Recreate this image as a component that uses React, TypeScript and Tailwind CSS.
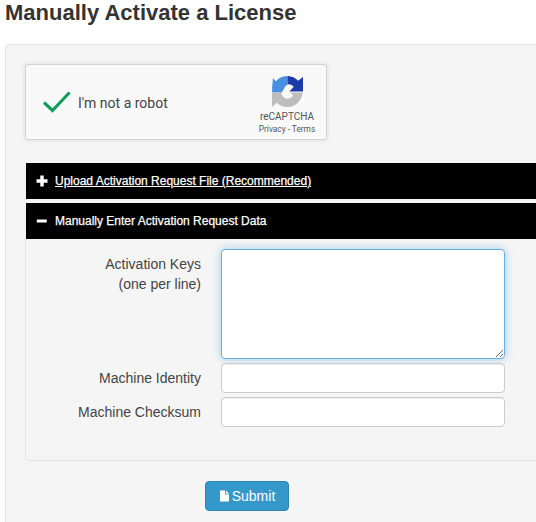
export default function App() {
  return (
    <div className="w-[536px] h-[522px] overflow-hidden bg-white text-[#333] text-[14px] leading-[20px]" style={{ fontFamily: '"Liberation Sans", Arial, sans-serif' }}>
      <h1 className="ml-[5px] h-[44px] text-[22px] leading-[26px] font-bold text-[#333] whitespace-nowrap">Manually Activate a License</h1>
      <div className="ml-[5px] w-[640px] h-[600px] bg-[#f5f5f5] border border-[#e3e3e3] rounded-[4px] pt-[19px] pl-[19px]">
        <div className="relative w-[302px] h-[76px] bg-[#f9f9f9] border border-[#d3d3d3] rounded-[3px] shadow-[0_0_4px_1px_rgba(0,0,0,0.08)] flex items-center">
          <svg className="ml-[16px] shrink-0" width="30" height="24" viewBox="0 0 30 24" fill="none">
            <path d="M2 12.5 L10.5 20.5 L27.5 2.5" stroke="#0f9d58" strokeWidth="3.1" />
          </svg>
          <span className="ml-[6px] mt-[2px] text-[14px] text-[#444]" style={{ fontFamily: 'Roboto, sans-serif' }}>I'm not a robot</span>
          <div className="absolute right-[12px] top-[11px] w-[56px] flex flex-col items-center" style={{ fontFamily: 'Roboto, sans-serif' }}>
            <svg width="31" height="31" viewBox="0 0 32 32" className="ml-[3px]">
              <path d="M16 0 A16 16 0 0 0 0.5 12 L0 17 L10 17 L12.5 13 A5 5 0 0 1 16 9 Z" fill="#4a90e2" />
              <path d="M1 2 L0 14 L11 14 Z" fill="#4a90e2" />
              <path d="M16 0 A16 16 0 0 1 27 5 L32 1 L32 16 L18 16 L22.5 11 A8 8 0 0 0 16 8.5 Z" fill="#1c3aa9" />
              <path d="M0 17 L9.5 17 A7.5 7.5 0 0 0 16 23.5 A8 8 0 0 0 22 20.5 L19 17 L31.5 17 A16 16 0 0 1 16 32 A16 16 0 0 1 5 27.5 L0 32 Z" fill="#bdbdbd" />
            </svg>
            <div className="mt-[3px] ml-[2px] text-[10px] leading-[13px] text-[#555] whitespace-nowrap">reCAPTCHA</div>
            <div className="ml-[2px] text-[8.3px] leading-[12px] text-[#555] whitespace-nowrap">Privacy - Terms</div>
          </div>
        </div>
        <div className="ml-[1px] mt-[23px] h-[36px] bg-black text-white text-[12px] [-webkit-text-stroke:0.25px_white] flex items-center pl-[10px]">
          <svg width="12" height="12" viewBox="0 0 12 12" fill="white" className="shrink-0"><path d="M4.3 0.5h3.4v3.8h3.8v3.4H7.7v3.8H4.3V7.7H0.5V4.3h3.8z" /></svg>
          <a className="ml-[7px] underline whitespace-nowrap">Upload Activation Request File (Recommended)</a>
        </div>
        <div className="ml-[1px] mt-[4px] h-[36px] bg-black text-white text-[12px] [-webkit-text-stroke:0.25px_white] flex items-center pl-[10px]">
          <svg width="12" height="12" viewBox="0 0 12 12" fill="white" className="shrink-0"><path d="M0.8 4.5h10v3H0.8z" /></svg>
          <span className="ml-[7px] whitespace-nowrap">Manually Enter Activation Request Data</span>
        </div>
        <div className="w-[620px] h-[222px] border border-t-0 border-[#e3e3e3] rounded-b-[4px] pt-[10px]">
          <div className="flex">
            <label className="w-[175px] text-right text-[14px] leading-[20px] text-[#444] pt-[5px]">Activation Keys<br />(one per line)</label>
            <textarea className="ml-[20px] w-[284px] h-[110px] bg-white border border-[#66afe9] rounded-[4px] shadow-[0_0_8px_rgba(102,175,233,0.6)] outline-none block" />
          </div>
          <div className="flex mt-[4px]">
            <label className="w-[175px] text-right text-[14px] leading-[30px] text-[#444]">Machine Identity</label>
            <input className="ml-[20px] w-[284px] h-[30px] bg-white border border-[#ccc] rounded-[4px] shadow-[inset_0_1px_1px_rgba(0,0,0,0.075)] outline-none" />
          </div>
          <div className="flex mt-[4px]">
            <label className="w-[175px] text-right text-[14px] leading-[30px] text-[#444]">Machine Checksum</label>
            <input className="ml-[20px] w-[284px] h-[30px] bg-white border border-[#ccc] rounded-[4px] shadow-[inset_0_1px_1px_rgba(0,0,0,0.075)] outline-none" />
          </div>
        </div>
        <button className="ml-[180px] mt-[20px] w-[84px] h-[30px] bg-[#3498cb] border border-[#2e86b5] rounded-[4px] text-white text-[14px] flex items-center justify-center gap-[3px] pl-[1px]">
          <svg width="9" height="12" viewBox="0 0 10 12" fill="white" className="shrink-0"><path d="M0 0h5.6v3.8a.6.6 0 0 0 .6.6H10V12H0z" /><path d="M6.6 0 10 3.4H6.6z" /></svg>
          Submit
        </button>
      </div>
    </div>
  );
}
